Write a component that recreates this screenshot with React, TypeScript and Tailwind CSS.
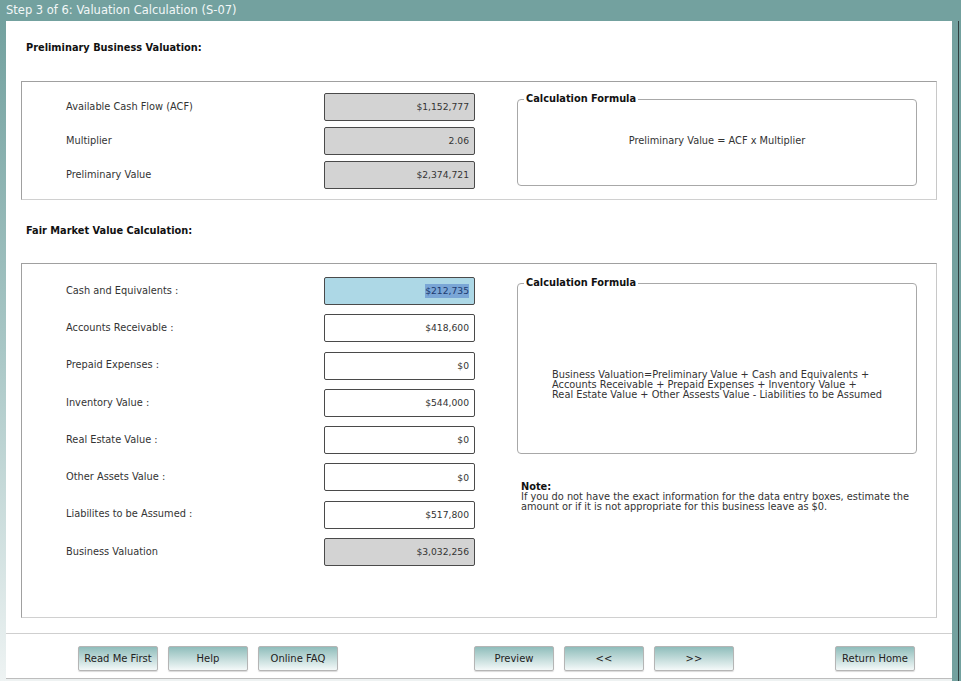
// Step 3 of 6 — valuation calculation screen.

const font = "font-['DejaVu_Sans','Verdana',sans-serif]";

interface Row {
  label: string;
  value: string;
  kind: "readonly" | "edit" | "focus";
}

const prelimRows: Row[] = [
  { label: "Available Cash Flow (ACF)", value: "$1,152,777", kind: "readonly" },
  { label: "Multiplier", value: "2.06", kind: "readonly" },
  { label: "Preliminary Value", value: "$2,374,721", kind: "readonly" },
];

const fairRows: Row[] = [
  { label: "Cash and Equivalents :", value: "$212,735", kind: "focus" },
  { label: "Accounts Receivable :", value: "$418,600", kind: "edit" },
  { label: "Prepaid Expenses :", value: "$0", kind: "edit" },
  { label: "Inventory Value :", value: "$544,000", kind: "edit" },
  { label: "Real Estate Value :", value: "$0", kind: "edit" },
  { label: "Other Assets Value :", value: "$0", kind: "edit" },
  { label: "Liabilites to be Assumed :", value: "$517,800", kind: "edit" },
  { label: "Business Valuation", value: "$3,032,256", kind: "readonly" },
];

function ValueBox({ row }: { row: Row }) {
  const bg =
    row.kind === "readonly"
      ? "bg-[#d3d3d3]"
      : row.kind === "focus"
        ? "bg-[#add8e6]"
        : "bg-white";
  return (
    <div
      className={`flex h-[28px] w-[151px] items-center justify-end rounded-[2px] border border-[#4a4a4a] pr-[5px] text-[9.2px] text-[#333] ${bg}`}
    >
      {row.kind === "focus" ? (
        <span className="bg-[#7aa6d6] text-[#1c3b70]">{row.value}</span>
      ) : (
        row.value
      )}
    </div>
  );
}

function FieldRow({ row }: { row: Row }) {
  return (
    <div className="flex items-center">
      <div className="w-[302px] shrink-0 pl-[44px] text-[9.8px] text-[#333]">{row.label}</div>
      <ValueBox row={row} />
    </div>
  );
}

function FormulaBox({
  className,
  children,
}: {
  className: string;
  children: React.ReactNode;
}) {
  return (
    <fieldset
      className={`w-[400px] rounded-[4px] border border-[#a8a8a8] px-[6px] ${className}`}
    >
      <legend className="px-[2px] text-[9.8px] font-bold leading-[12px] text-[#111]">
        Calculation Formula
      </legend>
      {children}
    </fieldset>
  );
}

function NavButton({ label, className = "" }: { label: string; className?: string }) {
  return (
    <button
      className={`h-[25px] w-[80px] rounded-[2px] border border-[#b5b5b5] bg-gradient-to-b from-[#8fbdbb] to-[#f4f9f9] text-[10px] text-[#222] shadow-[0_1px_1px_rgba(0,0,0,0.15)] ${className}`}
    >
      {label}
    </button>
  );
}

export default function App() {
  return (
    <div className={`flex h-[681px] w-[961px] flex-col bg-[#73a19f] ${font}`}>
      {/* Title bar */}
      <div className="flex h-[21px] items-center pl-[6px] text-[11.5px] text-[#f2f7f7]">
        Step 3 of 6: Valuation Calculation (S-07)
      </div>

      <div className="flex flex-1">
        {/* Left frame edge */}
        <div className="w-[6px] bg-gradient-to-b from-[#73a19f] via-[#a9c7c6] to-[#eef3f3]" />

        {/* Content */}
        <div className="flex w-[946px] flex-col bg-white">
          <div className="pl-[20px] pt-[21px] text-[9.8px] font-bold leading-[12px] text-[#111]">
            Preliminary Business Valuation:
          </div>

          <div className="ml-[15px] mt-[27px] flex h-[119px] w-[916px] border border-[#a0a0a0] border-b-[#d0d0d0] border-r-[#c8c8c8]">
            <div className="flex w-[453px] flex-col gap-[6px] pt-[11px]">
              {prelimRows.map((r) => (
                <FieldRow key={r.label} row={r} />
              ))}
            </div>
            <FormulaBox className="ml-[42px] mt-[11px] flex h-[93px] items-center justify-center">
              <div className="w-full pb-[8px] text-center text-[9.8px] text-[#333]">
                Preliminary Value = ACF x Multiplier
              </div>
            </FormulaBox>
          </div>

          <div className="pl-[20px] pt-[25px] text-[9.8px] font-bold leading-[12px] text-[#111]">
            Fair Market Value Calculation:
          </div>

          <div className="ml-[15px] mt-[26px] flex h-[355px] w-[916px] border border-[#a0a0a0] border-b-[#d0d0d0] border-r-[#c8c8c8]">
            <div className="flex w-[453px] flex-col gap-[9.3px] pt-[13px]">
              {fairRows.map((r) => (
                <FieldRow key={r.label} row={r} />
              ))}
            </div>
            <div className="ml-[42px] flex flex-col">
              <FormulaBox className="mt-[13px] h-[177px]">
                <div className="pt-[81px] text-center">
                  <div className="inline-block text-left text-[9.8px] leading-[10px] text-[#333]">
                    Business Valuation=Preliminary Value + Cash and Equivalents +
                    <br />
                    Accounts Receivable + Prepaid Expenses + Inventory Value +
                    <br />
                    Real Estate Value + Other Assests Value - Liabilities to be Assumed
                  </div>
                </div>
              </FormulaBox>
              <div className="ml-[4px] mt-[28px] text-[9.8px] leading-[10px] text-[#333]">
                <div className="font-bold text-[#111]">Note:</div>
                If you do not have the exact information for the data entry boxes, estimate the
                <br />
                amount or if it is not appropriate for this business leave as $0.
              </div>
            </div>
          </div>

          <div className="mt-[15px] h-px w-full bg-[#cfcfcf]" />

          <div className="flex items-start pt-[12px]">
            <NavButton label="Read Me First" className="ml-[72px]" />
            <NavButton label="Help" className="ml-[10px]" />
            <NavButton label="Online FAQ" className="ml-[10px]" />
            <NavButton label="Preview" className="ml-[136px]" />
            <NavButton label="<<" className="ml-[10px]" />
            <NavButton label=">>" className="ml-[10px]" />
            <NavButton label="Return Home" className="ml-[101px]" />
          </div>
          <div className="flex-1" />
          <div className="h-[3px] border-t border-[#bdbdbd] bg-[#eef2f2]" />
        </div>

        {/* Right frame edge */}
        <div className="flex w-[9px]">
          <div className="w-[6px]" />
          <div className="w-[1px] bg-[#2f3f3f]" />
          <div className="w-[2px]" />
        </div>
      </div>
    </div>
  );
}
